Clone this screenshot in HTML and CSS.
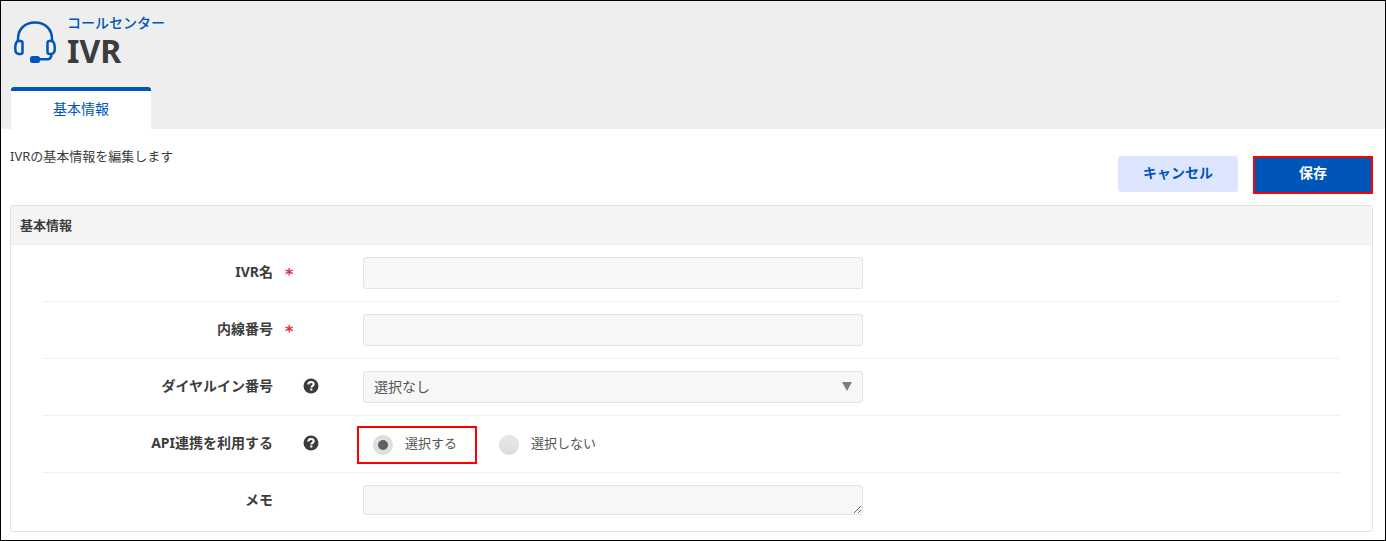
FILE: index.html
```html
<!DOCTYPE html>
<html lang="ja">
<head>
    <meta charset="UTF-8">
    <meta name="viewport" content="width=device-width, initial-scale=1.0">
    <title>IVR</title>
    <link rel="stylesheet" href="styles.css">
</head>
<body>
    <header class="page-header">
        <div class="title-row">
            <svg class="headset" viewBox="0 0 42 42" width="42" height="42" fill="none" stroke="#0056b8" stroke-width="2.500" aria-hidden="true">
                <path d="M4 20V18C4 8 11 1.500 21 1.500S38 8 38 18V20"/>
                <path d="M4 20H6.500Q8.500 20 8.500 22V31Q8.500 33 6.500 33H4.500Q1.500 32.500 1.300 29V26Q1.500 21 4 20Z"/>
                <path d="M38 20H35.500Q33.500 20 33.500 22V31Q33.500 33 35.500 33H37.500Q40.500 32.500 40.700 29V26Q40.500 21 38 20Z"/>
                <path d="M37.500 33C37.500 36.500 36 38.300 33 38.300H25"/>
                <rect x="16" y="35" width="10" height="7" rx="2.500" fill="#0056b8" stroke="none"/>
            </svg>
            <div>
                <p class="category">コールセンター</p>
                <h1>IVR</h1>
            </div>
        </div>
        <nav class="tabs">
            <a class="tab" href="#basic">基本情報</a>
        </nav>
    </header>

    <form class="content">
        <div class="toolbar">
            <p class="intro">IVRの基本情報を編集します</p>
            <div class="buttons">
                <button type="button" class="btn btn-cancel">キャンセル</button>
                <button type="submit" class="btn btn-save">保存</button>
            </div>
        </div>

        <section class="panel" id="basic">
            <h2>基本情報</h2>
            <div class="rows">
                <div class="row">
                    <label class="name" for="ivr-name">IVR名</label>
                    <span class="required">*</span>
                    <input type="text" class="field" id="ivr-name" name="ivr-name">
                </div>
                <div class="row">
                    <label class="name" for="extension">内線番号</label>
                    <span class="required">*</span>
                    <input type="text" class="field" id="extension" name="extension">
                </div>
                <div class="row">
                    <label class="name" for="dial-in">ダイヤルイン番号</label>
                    <svg class="help" viewBox="0 0 16 16" width="16" height="16" aria-hidden="true">
                        <circle cx="8" cy="8" r="7.500" fill="#3c3c3c"/>
                        <path d="M5.300 6.400C5.300 4.700 6.500 3.900 8 3.900S10.700 4.800 10.700 6.200C10.700 7.800 8.300 7.900 8.300 9.600" fill="none" stroke="#fff" stroke-width="2"/>
                        <rect x="7.200" y="10.500" width="2.200" height="2" fill="#fff"/>
                    </svg>
                    <div class="select-wrap">
                        <select class="field" id="dial-in" name="dial-in">
                            <option>選択なし</option>
                        </select>
                    </div>
                </div>
                <div class="row" role="radiogroup" aria-labelledby="api-label">
                    <span class="name" id="api-label">API連携を利用する</span>
                    <svg class="help" viewBox="0 0 16 16" width="16" height="16" aria-hidden="true">
                        <circle cx="8" cy="8" r="7.500" fill="#3c3c3c"/>
                        <path d="M5.300 6.400C5.300 4.700 6.500 3.900 8 3.900S10.700 4.800 10.700 6.200C10.700 7.800 8.300 7.900 8.300 9.600" fill="none" stroke="#fff" stroke-width="2"/>
                        <rect x="7.200" y="10.500" width="2.200" height="2" fill="#fff"/>
                    </svg>
                    <div class="radios">
                        <label class="radio marked"><input type="radio" name="api" value="1" checked>選択する</label>
                        <label class="radio"><input type="radio" name="api" value="0">選択しない</label>
                    </div>
                </div>
                <div class="row">
                    <label class="name" for="memo">メモ</label>
                    <textarea class="field" id="memo" name="memo" rows="1"></textarea>
                </div>
            </div>
        </section>
    </form>
</body>
</html>
```
FILE: styles.css
```css
* {
    box-sizing: border-box;
}

body {
    margin: 0;
    min-height: 100vh;
    border: 1px solid #000;
    background-color: #fff;
    color: #3c3c3c;
    font-family: "Noto Sans", "Noto Sans CJK JP", sans-serif;
    font-size: 14px;
    line-height: 20px;
}

h1, h2, p {
    margin: 0;
}

/* Header */
.page-header {
    padding: 12px 10px 0;
    background-color: #eee;
}

.title-row {
    display: flex;
    gap: 11px;
    height: 74px;
    padding-left: 3px;
}

.headset {
    margin-top: 8px;
}

.category {
    color: #0056b8;
    font-weight: 500;
}

h1 {
    font-size: 32px;
    line-height: 36px;
}

.tabs {
    display: flex;
}

.tab {
    width: 140px;
    height: 42px;
    padding-top: 8px;
    border-top: 4px solid #0056b8;
    border-radius: 3px 3px 0 0;
    background-color: #fff;
    color: #0056b8;
    text-align: center;
    text-decoration: none;
}

/* Toolbar */
.content {
    padding: 17px 12px 8px 9px;
}

.toolbar {
    display: flex;
    justify-content: space-between;
    margin-bottom: 13px;
}

.intro {
    font-size: 13px;
}

.buttons {
    display: flex;
    gap: 15px;
    padding-top: 10px;
}

.btn {
    width: 120px;
    height: 36px;
    padding: 0 0 4px;
    border: none;
    border-radius: 3px;
    font-family: inherit;
    font-size: 14px;
    font-weight: bold;
    cursor: pointer;
}

.btn-cancel {
    background-color: #dee6ff;
    color: #0056b8;
}

.btn-save {
    position: relative;
    background-color: #0056b8;
    color: #fff;
}

/* Red highlight frames */
.btn-save::after,
.marked::after {
    content: "";
    position: absolute;
    border: 2px solid #f00;
}

.btn-save::after {
    inset: 0 0 -2px 0;
}

/* Form panel */
.panel {
    border: 1px solid #e3e3e3;
    border-radius: 3px;
}

h2 {
    height: 39px;
    padding: 9px;
    border-bottom: 1px solid #eee;
    background-color: #f4f4f4;
    font-size: 13px;
    line-height: 20px;
}

.rows {
    padding: 0 32px;
}

.row {
    display: grid;
    grid-template-columns: 230px 50px minmax(0, 500px);
    column-gap: 20px;
    height: 57px;
    padding-top: 12px;
    border-bottom: 1px solid #f0f0f0;
}

.row:last-child {
    height: 58px;
    border-bottom: none;
}

.name {
    padding-top: 5px;
    font-weight: bold;
    text-align: right;
}

.required {
    margin-left: -8px;
    padding-top: 8px;
    color: #d9303c;
    font-family: "DejaVu Sans", sans-serif;
    font-size: 16px;
    font-weight: bold;
}

.help {
    margin: 7px 0 0 10px;
}

.field {
    grid-column: 3;
    width: 100%;
    height: 32px;
    padding: 0 10px;
    border: 1px solid #e3e3e3;
    border-radius: 3px;
    background-color: #f7f7f7;
    color: #555;
    font-family: inherit;
    font-size: 14px;
}

textarea.field {
    height: 30px;
}

.select-wrap {
    position: relative;
    height: 32px;
}

.select-wrap select {
    padding-bottom: 2px;
    appearance: none;
}

.select-wrap::after {
    content: "";
    position: absolute;
    top: 11px;
    right: 11px;
    border: 5px solid transparent;
    border-top: 9px solid #777f88;
    border-bottom: none;
    pointer-events: none;
}

.radios {
    display: flex;
    gap: 42px;
    padding-left: 10px;
}

.radio {
    position: relative;
    display: flex;
    gap: 12px;
    height: 32px;
    padding-top: 5px;
    color: #555;
    font-size: 13px;
}

.radio input {
    display: grid;
    place-items: center;
    width: 20px;
    height: 20px;
    margin: 2px 0 0;
    border: 1px solid #ddd;
    border-radius: 50%;
    background: linear-gradient(#e8e8e8, #dcdcdc);
    appearance: none;
}

.radio input:checked {
    border-width: 2px;
    background: #e0e0e0;
}

.radio input:checked::after {
    content: "";
    width: 10px;
    height: 10px;
    border-radius: 50%;
    background-color: #606060;
}

.marked::after {
    inset: -2px -20px -4px -16px;
}
```
